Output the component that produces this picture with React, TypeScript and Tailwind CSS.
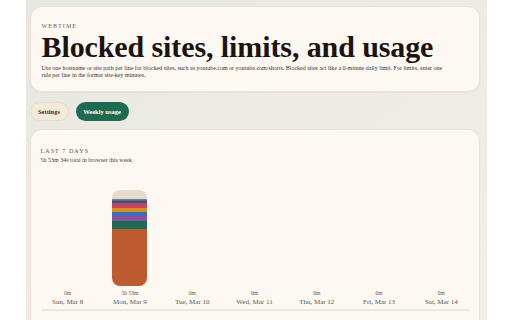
import React from "react";

const days = [
  { day: "Sun, Mar 8", total: "0m", segments: [] as { color: string; h: number }[] },
  {
    day: "Mon, Mar 9",
    total: "5h 53m",
    segments: [
      { color: "#e7dccb", h: 9 },
      { color: "#6f7fa8", h: 1 },
      { color: "#8a4fa0", h: 1 },
      { color: "#1e6b55", h: 2 },
      { color: "#c23d7a", h: 3 },
      { color: "#c94a4a", h: 2 },
      { color: "#d68f2a", h: 4 },
      { color: "#3b6fb2", h: 4 },
      { color: "#8a4fa0", h: 5 },
      { color: "#1e6b55", h: 8 },
      { color: "#bd5a30", h: 57 },
    ],
  },
  { day: "Tue, Mar 10", total: "0m", segments: [] },
  { day: "Wed, Mar 11", total: "0m", segments: [] },
  { day: "Thu, Mar 12", total: "0m", segments: [] },
  { day: "Fri, Mar 13", total: "0m", segments: [] },
  { day: "Sat, Mar 14", total: "0m", segments: [] },
];

export default function App() {
  return (
    <div className="min-h-screen bg-white" style={{ fontFamily: '"Liberation Serif", "DejaVu Serif", serif' }}>
      <div className="mx-auto w-[461px] min-h-[320px] pl-[4px] pr-[7px] pt-[6px] bg-gradient-to-br from-[#e6e8e2] via-[#eeebe4] to-[#f3efe8]">
        <header className="h-[86px] rounded-[12px] border border-[#ebe2d4] bg-[#fdf9f2] px-[11px] pt-[15px] shadow-[0_1px_2px_rgba(0,0,0,0.04)]">
          <div className="text-[6px] tracking-[0.18em] text-[#6b6259] leading-[8px]">WEBTIME</div>
          <h1 className="mt-[1px] text-[30px] font-bold leading-[31px] text-[#1b1410] tracking-[-0.1px]">
            Blocked sites, limits, and usage
          </h1>
          <p className="mt-[3px] w-[410px] text-[6px] leading-[7px] text-[#3a2f28]">
            Use one hostname or site path per line for blocked sites, such as youtube.com or youtube.com/shorts. Blocked sites act like a 0-minute daily limit. For limits, enter one rule per line in the format site-key minutes.
          </p>
        </header>

        <nav className="mt-[10px] flex gap-[7px]">
          <button className="h-[19px] w-[39px] rounded-full border border-[#ebdcc8] bg-[#f4e9db] text-[6.5px] font-bold text-[#3a2f28]">
            Settings
          </button>
          <button className="h-[19px] w-[53px] rounded-full bg-[#1f6b52] text-[6.5px] font-bold text-white">
            Weekly usage
          </button>
        </nav>

        <section className="mt-[8px] h-[200px] rounded-t-[12px] border border-b-0 border-[#ebe2d4] bg-[#fdf9f2] px-[10px] pt-[17px]">
          <div className="text-[6px] tracking-[0.18em] text-[#5e554d] leading-[8px]">LAST 7 DAYS</div>
          <div className="mt-[1px] text-[6px] leading-[8px] text-[#4a4038]">5h 53m 34s total in browser this week</div>

          <div className="mt-[26px] grid grid-cols-7 gap-[8px]">
            {days.map((d) => (
              <div key={d.day} className="flex flex-col items-center">
                <div className="flex h-[96px] w-[35px] items-end">
                  {d.segments.length > 0 && (
                    <div className="flex h-[96px] w-[35px] flex-col overflow-hidden rounded-[8px]">
                      {d.segments.map((s, i) => (
                        <div key={i} className="w-full shrink-0" style={{ height: s.h, background: s.color }} />
                      ))}
                    </div>
                  )}
                </div>
                <div className="mt-[4px] text-[5.5px] leading-[7px] text-[#5e554d]">{d.total}</div>
                <div className="mt-[1px] text-[7px] leading-[9px] text-[#5e554d]">{d.day}</div>
              </div>
            ))}
          </div>
          <div className="mt-[2px] h-[2px] bg-[#efe8dc]" />
        </section>
      </div>
    </div>
  );
}
